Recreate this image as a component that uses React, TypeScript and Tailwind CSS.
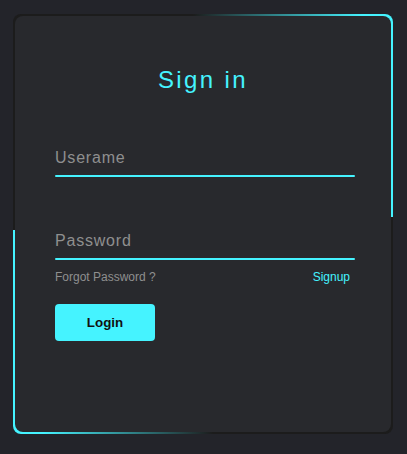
import React from "react";

function Field({ label }: { label: string }) {
  return (
    <div className="relative mt-[35px] w-[300px]">
      <input
        className="relative z-10 w-full bg-transparent px-[10px] pb-[10px] pt-[20px] text-base leading-[18px] tracking-[0.05em] text-[#23242a] outline-none"
        type="text"
        aria-label={label}
      />
      <span className="pointer-events-none absolute left-0 top-0 pb-[10px] pt-[20px] text-base leading-[18px] tracking-[0.05em] text-[#8f8f8f]">
        {label}
      </span>
      <i className="absolute bottom-0 left-0 h-[2px] w-full rounded bg-[#45f3ff]" />
    </div>
  );
}

export default function App() {
  return (
    <div className="flex min-h-[454px] bg-[#23242a] pl-[13px] pt-[14px] font-['Liberation_Sans',Arial,sans-serif]">
      <div className="relative h-[420px] w-[380px] overflow-hidden rounded-lg bg-[#1c1c1c]">
        {/* frozen state of the spinning border glow */}
        <div className="absolute right-0 top-0 h-[203px] w-[200px] bg-[linear-gradient(to_right,transparent,#45f3ff_85%)]" />
        <div className="absolute bottom-0 left-0 h-[204px] w-[200px] bg-[linear-gradient(to_left,transparent,#45f3ff_85%)]" />

        <form className="absolute inset-[2px] z-10 flex flex-col rounded-lg bg-[#28292d] px-10 py-[50px]">
          <h2 className="text-center text-2xl font-medium leading-[28px] tracking-[0.1em] text-[#45f3ff]">
            Sign in
          </h2>

          <Field label="Userame" />
          <Field label="Password" />

          <div className="flex w-[300px] justify-between pr-[5px]">
            <a href="#" className="my-[10px] text-xs leading-[14px] text-[#8f8f8f]">
              Forgot Password ?
            </a>
            <a href="#" className="my-[10px] text-xs leading-[14px] text-[#45f3ff]">
              Signup
            </a>
          </div>

          <button
            type="button"
            className="mt-[10px] w-[100px] rounded bg-[#45f3ff] px-[25px] py-[11px] text-[13.33px] font-semibold leading-[15px] text-[#111]"
          >
            Login
          </button>
        </form>
      </div>
    </div>
  );
}
